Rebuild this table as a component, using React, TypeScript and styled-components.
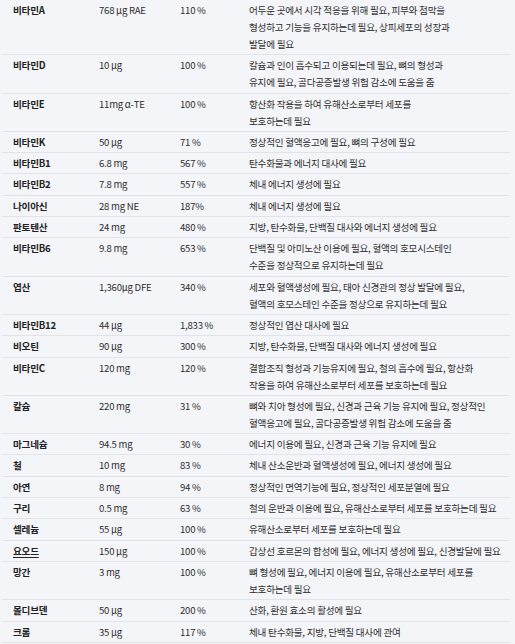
import React from "react";
import styled, { createGlobalStyle } from "styled-components";

const Global = createGlobalStyle`
  html, body {
    margin: 0;
    padding: 0;
    background: #f4f5f9;
  }
  body {
    font-family: "Noto Sans CJK KR", "Noto Sans", sans-serif;
    -webkit-font-smoothing: antialiased;
  }
`;

const Table = styled.div`
  display: flex;
  flex-direction: column;
  padding: 0 5px 0 2px;
  background: #f4f5f9;
`;

const Row = styled.div`
  display: grid;
  grid-template-columns: 86px 81px 69px 1fr;
  padding: 2px 0 1.3px 11px;
  border-bottom: 1px solid #e1e3e9;
  font-size: 9.6px;
  line-height: 17px;
  letter-spacing: -0.25px;
`;

const Name = styled.div<{ $underline?: boolean }>`
  font-weight: 700;
  color: #222;
  text-decoration: ${(p) => (p.$underline ? "underline" : "none")};
  text-underline-offset: 2px;
`;

const Value = styled.div`
  color: #2e2e2e;
  white-space: nowrap;
`;

const Desc = styled.div`
  color: #2e2e2e;
  white-space: nowrap;
`;

type Item = {
  name: string;
  amount: string;
  pct: string;
  lines: string[];
  underline?: boolean;
};

const items: Item[] = [
  {
    name: "비타민A",
    amount: "768 μg RAE",
    pct: "110 %",
    lines: [
      "어두운 곳에서 시각 적응을 위해 필요, 피부와 점막을",
      "형성하고 기능을 유지하는데 필요, 상피세포의 성장과",
      "발달에 필요",
    ],
  },
  {
    name: "비타민D",
    amount: "10 μg",
    pct: "100 %",
    lines: [
      "칼슘과 인이 흡수되고 이용되는데 필요, 뼈의 형성과",
      "유지에 필요, 골다공증발생 위험 감소에 도움을 줌",
    ],
  },
  {
    name: "비타민E",
    amount: "11mg α-TE",
    pct: "100 %",
    lines: ["항산화 작용을 하여 유해산소로부터 세포를", "보호하는데 필요"],
  },
  { name: "비타민K", amount: "50 μg", pct: "71 %", lines: ["정상적인 혈액응고에 필요, 뼈의 구성에 필요"] },
  { name: "비타민B1", amount: "6.8 mg", pct: "567 %", lines: ["탄수화물과 에너지 대사에 필요"] },
  { name: "비타민B2", amount: "7.8 mg", pct: "557 %", lines: ["체내 에너지 생성에 필요"] },
  { name: "나이아신", amount: "28 mg NE", pct: "187%", lines: ["체내 에너지 생성에 필요"] },
  { name: "판토텐산", amount: "24 mg", pct: "480 %", lines: ["지방, 탄수화물, 단백질 대사와 에너지 생성에 필요"] },
  {
    name: "비타민B6",
    amount: "9.8 mg",
    pct: "653 %",
    lines: ["단백질 및 아미노산 이용에 필요, 혈액의 호모시스테인", "수준을 정상적으로 유지하는데 필요"],
  },
  {
    name: "엽산",
    amount: "1,360μg DFE",
    pct: "340 %",
    lines: ["세포와 혈액생성에 필요, 태아 신경관의 정상 발달에 필요,", "혈액의 호모스테인 수준을 정상으로 유지하는데 필요"],
  },
  { name: "비타민B12", amount: "44 μg", pct: "1,833 %", lines: ["정상적인 엽산 대사에 필요"] },
  { name: "비오틴", amount: "90 μg", pct: "300 %", lines: ["지방, 탄수화물, 단백질 대사와 에너지 생성에 필요"] },
  {
    name: "비타민C",
    amount: "120 mg",
    pct: "120 %",
    lines: ["결합조직 형성과 기능유지에 필요, 철의 흡수에 필요, 항산화", "작용을 하여 유해산소로부터 세포를 보호하는데 필요"],
  },
  {
    name: "칼슘",
    amount: "220 mg",
    pct: "31 %",
    lines: ["뼈와 치아 형성에 필요, 신경과 근육 기능 유지에 필요, 정상적인", "혈액응고에 필요, 골다공증발생 위험 감소에 도움을 줌"],
  },
  { name: "마그네슘", amount: "94.5 mg", pct: "30 %", lines: ["에너지 이용에 필요, 신경과 근육 기능 유지에 필요"] },
  { name: "철", amount: "10 mg", pct: "83 %", lines: ["체내 산소운반과 혈액생성에 필요, 에너지 생성에 필요"] },
  { name: "아연", amount: "8 mg", pct: "94 %", lines: ["정상적인 면역기능에 필요, 정상적인 세포분열에 필요"] },
  { name: "구리", amount: "0.5 mg", pct: "63 %", lines: ["철의 운반과 이용에 필요, 유해산소로부터 세포를 보호하는데 필요"] },
  { name: "셀레늄", amount: "55 μg", pct: "100 %", lines: ["유해산소로부터 세포를 보호하는데 필요"] },
  {
    name: "요오드",
    amount: "150 μg",
    pct: "100 %",
    lines: ["갑상선 호르몬의 합성에 필요, 에너지 생성에 필요, 신경발달에 필요"],
    underline: true,
  },
  {
    name: "망간",
    amount: "3 mg",
    pct: "100 %",
    lines: ["뼈 형성에 필요, 에너지 이용에 필요, 유해산소로부터 세포를", "보호하는데 필요"],
  },
  { name: "몰디브덴", amount: "50 μg", pct: "200 %", lines: ["산화, 환원 효소의 활성에 필요"] },
  { name: "크롬", amount: "35 μg", pct: "117 %", lines: ["체내 탄수화물, 지방, 단백질 대사에 관여"] },
];

export default function App() {
  return (
    <>
      <Global />
      <Table>
        {items.map((it) => (
          <Row key={it.name}>
            <Name $underline={it.underline}>{it.name}</Name>
            <Value>{it.amount}</Value>
            <Value>{it.pct}</Value>
            <Desc>
              {it.lines.map((l, i) => (
                <div key={i}>{l}</div>
              ))}
            </Desc>
          </Row>
        ))}
      </Table>
    </>
  );
}
